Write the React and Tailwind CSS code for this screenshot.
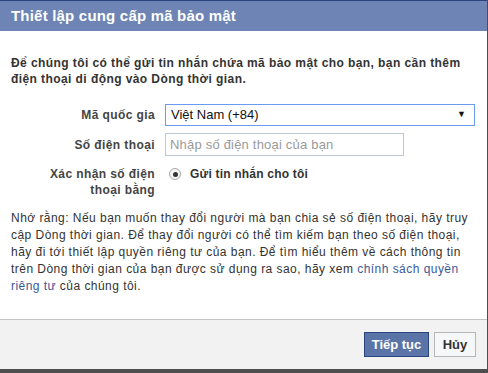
export default function App() {
  return (
    <div className="w-[488px] h-[373px] bg-[#4e4e4e] overflow-hidden font-['Liberation_Sans',Arial,sans-serif]">
      <div className="w-[487px] h-[369px] flex flex-col bg-white">
        {/* Header */}
        <div className="h-[31px] shrink-0 border-t border-[#29447e] bg-[#6d84b4] px-[11px] flex items-center">
          <span className="text-white font-bold text-[15px] tracking-[0.2px]">Thiết lập cung cấp mã bảo mật</span>
        </div>

        {/* Body */}
        <div className="flex-1 px-[11px] pt-[24px] text-[12px] text-[#333]">
          <p className="font-bold leading-[16px] tracking-[0.42px]">
            Để chúng tôi có thể gửi tin nhắn chứa mã bảo mật cho bạn, bạn cần thêm
            <br />
            điện thoại di động vào Dòng thời gian.
          </p>

          <div className="mt-[17px] grid grid-cols-[144px_1fr] gap-x-[10px] gap-y-[7px] items-center">
            <label className="text-right font-bold text-[#444] tracking-[0.4px]">Mã quốc gia</label>
            <div className="w-[310px] h-[22px] border border-[#6b9bf0] flex items-center justify-between pl-[5px] pr-[8px] text-[13px] text-[#111]">
              <span>Việt Nam (+84)</span>
              <span className="text-[9px]">▼</span>
            </div>

            <label className="text-right font-bold text-[#444] tracking-[0.4px]">Số điện thoại</label>
            <div className="w-[239px] h-[23px] border border-[#bdc7d8] flex items-center pl-[4px] text-[13px] text-[#9a9a9a] tracking-[0.2px]">
              Nhập số điện thoại của bạn
            </div>

            <label className="self-start mt-[3px] text-right font-bold text-[#444] leading-[16px] tracking-[0.4px]">
              Xác nhận số điện
              <br />
              thoại bằng
            </label>
            <div className="self-start mt-[3px] flex items-center h-[16px] pl-[4px]">
              <span className="w-[12px] h-[12px] rounded-full border border-[#aaa] bg-[#f4f4f4] flex items-center justify-center">
                <span className="w-[5px] h-[5px] rounded-full bg-[#333]" />
              </span>
              <span className="ml-[9px] font-bold text-[#333] tracking-[0.2px]">Gửi tin nhắn cho tôi</span>
            </div>
          </div>

          <p className="mt-[12px] leading-[17px] text-[#333] tracking-[0.46px]">
            Nhớ rằng: Nếu bạn muốn thay đổi người mà bạn chia sẻ số điện thoại, hãy truy
            <br />
            cập Dòng thời gian. Để thay đổi người có thể tìm kiếm bạn theo số điện thoại,
            <br />
            hãy đi tới thiết lập quyền riêng tư của bạn. Để tìm hiểu thêm về cách thông tin
            <br />
            trên Dòng thời gian của bạn được sử dụng ra sao, hãy xem{" "}
            <span className="text-[#3b5998]">chính sách quyền</span>
            <br />
            <span className="text-[#3b5998]">riêng tư</span> của chúng tôi.
          </p>
        </div>

        {/* Footer */}
        <div className="h-[50px] shrink-0 border-t border-[#c4c4c4] bg-[#f2f2f2] flex items-center justify-end gap-[5px] pr-[11px]">
          <button className="w-[65px] h-[25px] bg-[#5b74a8] border border-[#29447e] text-white font-bold text-[13px]">
            Tiếp tục
          </button>
          <button className="w-[42px] h-[25px] bg-[#f6f7f9] border border-[#b6b6b6] text-[#333] font-bold text-[13px]">
            Hủy
          </button>
        </div>
      </div>
    </div>
  );
}
